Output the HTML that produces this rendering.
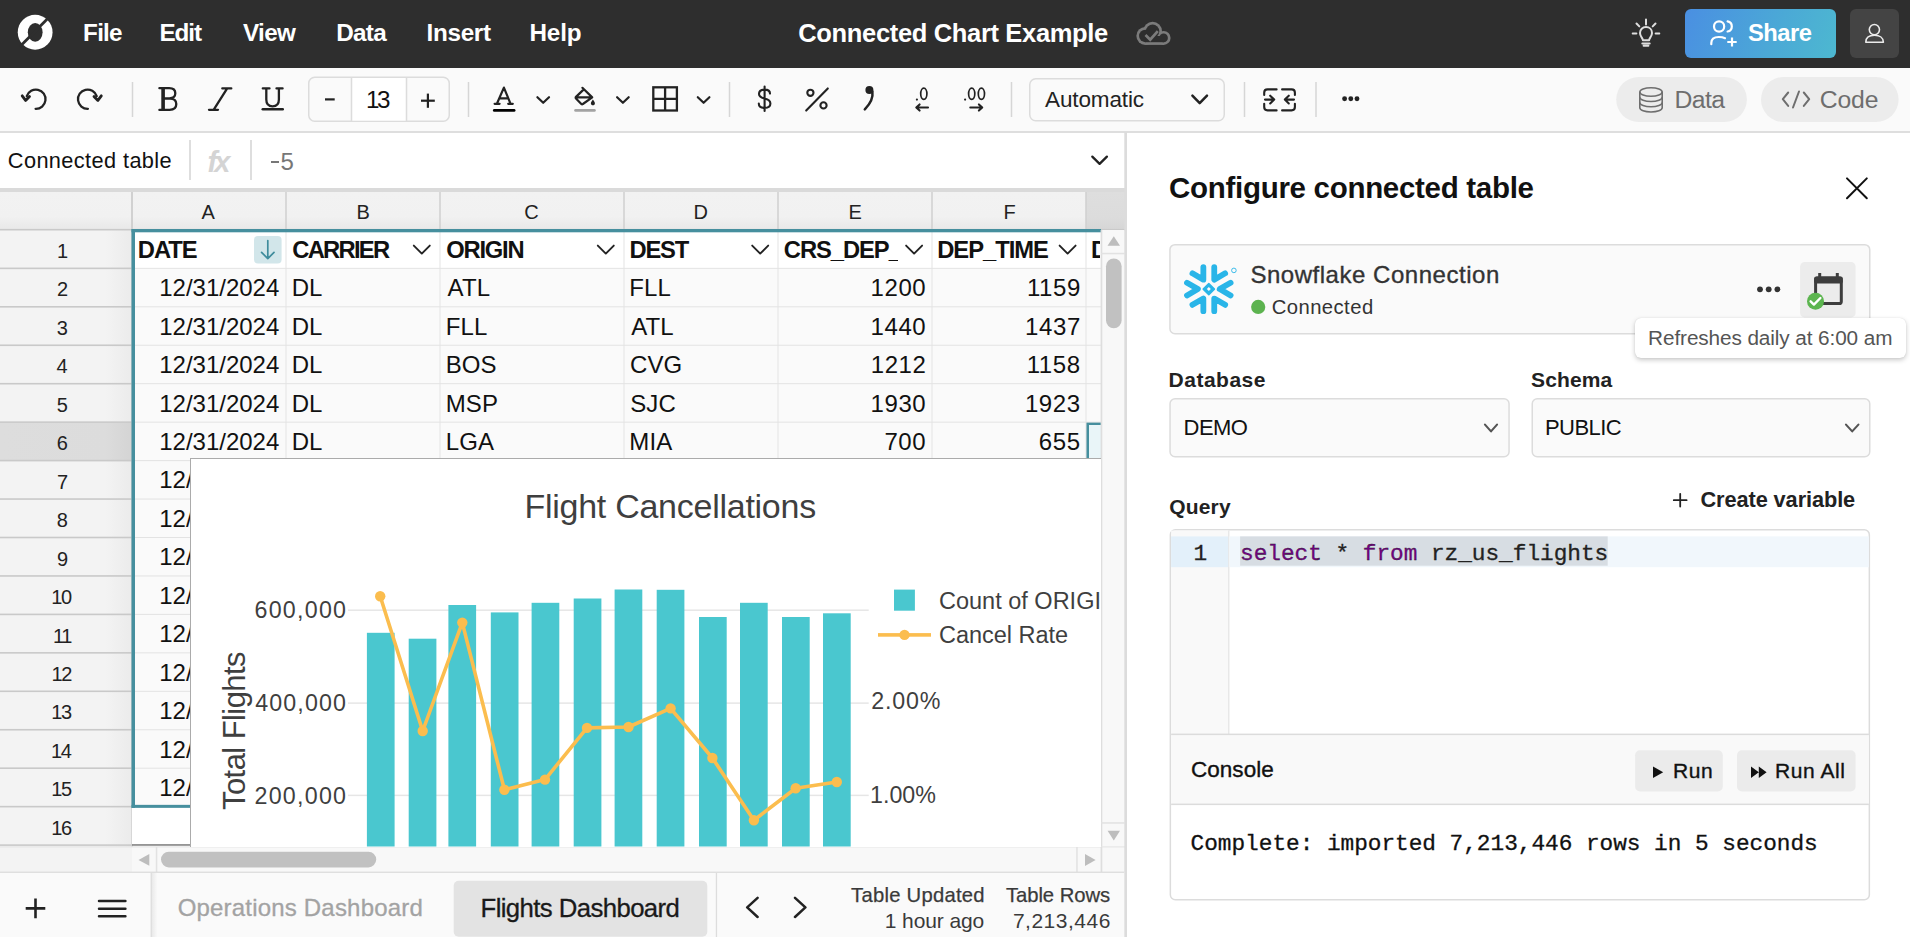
<!DOCTYPE html>
<html><head><meta charset="utf-8"><title>Connected Chart Example</title>
<style>
html,body{margin:0;padding:0;width:1910px;height:937px;overflow:hidden;background:#fff;font-family:"Liberation Sans",sans-serif}
.b{position:absolute;box-sizing:border-box}
.t{position:absolute;white-space:pre}
svg.b{overflow:visible}
</style></head><body>
<div class="b" style="left:0px;top:0px;width:1910px;height:67.5px;background:#2e2e2e"></div>
<svg class="b" style="left:0px;top:0px;" width="70" height="67" viewBox="0 0 70 67"><circle cx="35.15" cy="32.25" r="17.4" fill="#fff"/><ellipse cx="35.2" cy="32.35" rx="7.4" ry="9.3" fill="#2e2e2e"/><line x1="49" y1="17.2" x2="20" y2="46.6" stroke="#2e2e2e" stroke-width="2.8"/></svg>
<div class="t" style="left:83.1px;top:21.0px;font:normal 600 24.25px/24.25px 'Liberation Sans';color:#ffffff;letter-spacing:-0.76px;">File</div>
<div class="t" style="left:159.5px;top:21.0px;font:normal 600 24.25px/24.25px 'Liberation Sans';color:#ffffff;letter-spacing:-1.09px;">Edit</div>
<div class="t" style="left:243.0px;top:21.0px;font:normal 600 24.25px/24.25px 'Liberation Sans';color:#ffffff;letter-spacing:-0.63px;">View</div>
<div class="t" style="left:336.2px;top:21.0px;font:normal 600 24.25px/24.25px 'Liberation Sans';color:#ffffff;letter-spacing:-0.71px;">Data</div>
<div class="t" style="left:426.5px;top:21.0px;font:normal 600 24.25px/24.25px 'Liberation Sans';color:#ffffff;letter-spacing:-0.30px;">Insert</div>
<div class="t" style="left:529.5px;top:21.0px;font:normal 600 24.25px/24.25px 'Liberation Sans';color:#ffffff;letter-spacing:-0.17px;">Help</div>
<div class="t" style="left:798.3px;top:21.0px;font:normal 600 25.5px/25.5px 'Liberation Sans';color:#ffffff;letter-spacing:-0.34px;">Connected Chart Example</div>
<svg class="b" style="left:0;top:0" width="1910" height="67" viewBox="0 0 1910 67"><g fill="#7b7b7b"><circle cx="1145.3" cy="35.95" r="8.95"/><circle cx="1152.6" cy="31.2" r="9.35"/><circle cx="1163.6" cy="37.9" r="7"/><rect x="1145.3" y="36" width="18.7" height="8.9"/></g><g fill="#2e2e2e"><circle cx="1145.3" cy="35.95" r="6.25"/><circle cx="1152.6" cy="31.2" r="6.65"/><circle cx="1163.6" cy="37.9" r="4.3"/><rect x="1145.3" y="36" width="18.7" height="6.2"/></g><path d="M1145.5 35 L1150.2 39.7 L1157.8 31.1" fill="none" stroke="#7b7b7b" stroke-width="2.7"/></svg>
<svg class="b" style="left:0;top:0" width="1910" height="67" viewBox="0 0 1910 67"><g fill="none" stroke="#dedede" stroke-width="2" stroke-linecap="round" stroke-linejoin="round"><path d="M1642.9 40.2 C1642.9 38.2 1640 36.6 1640 33 C1640 29.6 1642.6 27.1 1646 27.1 C1649.4 27.1 1652 29.6 1652 33 C1652 36.6 1649.1 38.2 1649.1 40.2 Z"/><path d="M1642.3 43.4 H1649.7 M1643.6 45.8 H1648.4 M1646 19.6 V24.4 M1636.5 23.5 L1639.3 26.4 M1655.5 23.5 L1652.7 26.4 M1632.7 33.5 H1636.4 M1655.6 33.5 H1659.3"/></g></svg>
<div class="b" style="left:1685px;top:9px;width:151px;height:49px;background:linear-gradient(110deg,#4a8fe2 0%,#4ba9d6 60%,#4db8d0 100%);border-radius:6px"></div>
<svg class="b" style="left:0;top:0" width="1910" height="67" viewBox="0 0 1910 67"><g fill="none" stroke="#fff" stroke-width="2.2" stroke-linecap="round"><circle cx="1719.1" cy="26.5" r="5.1"/><path d="M1727.6 21.4 C1730.2 21.9 1731.8 24 1731.8 26.45 C1731.8 28.9 1730.2 31 1727.6 31.5"/><path d="M1711.3 44.2 V43 C1711.3 39.2 1714.2 37 1718.8 37 C1721.8 37 1723.6 37.5 1725 38.2"/></g><path d="M1732 37.6 V46.6 M1727.3 42 H1736.7" stroke="#fff" stroke-width="2.2" stroke-linecap="butt"/></svg>
<div class="t" style="left:1748.0px;top:21.0px;font:normal 700 23.75px/23.75px 'Liberation Sans';color:#ffffff;letter-spacing:-0.53px;">Share</div>
<div class="b" style="left:1850px;top:9px;width:49px;height:49px;background:#444;border-radius:6px"></div>
<svg class="b" style="left:0;top:0" width="1910" height="67" viewBox="0 0 1910 67"><g fill="none" stroke="#ebebeb" stroke-width="1.6" stroke-linejoin="round"><circle cx="1874.4" cy="29.6" r="5.1"/><path d="M1865.8 42.2 C1865.8 37.7 1869.4 35.3 1874.5 35.3 C1879.6 35.3 1883.4 37.7 1883.4 42.2 Z"/></g></svg>
<div class="b" style="left:0px;top:67.5px;width:1910px;height:63.5px;background:#fafafa"></div>
<div class="b" style="left:0px;top:131px;width:1125px;height:1.5px;background:#dedede"></div>
<div class="b" style="left:1125px;top:131px;width:785px;height:1.5px;background:#dedede"></div>
<svg class="b" style="left:0;top:0" width="1910" height="937" viewBox="0 0 1910 937"><g fill="none" stroke="#222" stroke-width="2.1" stroke-linecap="round" stroke-linejoin="round"><path d="M35.6 108.8 A9.6 9.6 0 1 0 26.8 96.2" stroke-width="2.3"/><path d="M22.2 95.8 L25.6 100.4 L29.5 96.4" stroke-width="2.8"/><path d="M87.9 108.8 A9.6 9.6 0 1 1 96.7 96.2" stroke-width="2.3"/><path d="M101.3 95.8 L97.9 100.4 L94 96.4" stroke-width="2.8"/></g><rect x="131.75" y="82" width="1.5" height="35" fill="#d6d6d6"/><rect x="467.75" y="82" width="1.5" height="35" fill="#d6d6d6"/><rect x="728.75" y="82" width="1.5" height="35" fill="#d6d6d6"/><rect x="1010.75" y="82" width="1.5" height="35" fill="#d6d6d6"/><rect x="1243.75" y="82" width="1.5" height="35" fill="#d6d6d6"/><rect x="1315.25" y="82" width="1.5" height="35" fill="#d6d6d6"/><g fill="none" stroke="#222" stroke-width="2.3" stroke-linecap="round" stroke-linejoin="round"><path d="M159.4 88.2 H169.2 C173.5 88.2 175.3 90.6 175.3 93.3 C175.3 96.2 173.2 98.3 169.4 98.3 H163 M163 98.6 H170 C174.6 98.6 176.3 101.3 176.3 104.1 C176.3 107.5 173.9 109.9 169.6 109.9 H159.4"/></g><rect x="161.3" y="88" width="3.6" height="22" fill="#222"/><g fill="none" stroke="#222" stroke-width="2.3" stroke-linecap="round" stroke-linejoin="round"><path d="M222.3 88.4 H231.3 M209 109.8 H218 M227.2 88.4 L213.6 109.8"/><path d="M262.8 88.4 H269.5 M276.5 88.4 H282.6 M266.3 88.6 V99.5 C266.3 104 269 106.3 272.6 106.3 C276.2 106.3 278.9 104 278.9 99.5 V88.6"/></g><rect x="261.5" y="108" width="22.5" height="2.6" rx="1.3" fill="#222"/><rect x="308.75" y="77.25" width="140.5" height="44" rx="6" fill="#fafafa" stroke="#dcdcdc" stroke-width="1.5"/><rect x="351.5" y="78" width="55" height="42.5" fill="#fff"/><rect x="350.75" y="77.5" width="1.5" height="43.5" fill="#dcdcdc"/><rect x="405.75" y="77.5" width="1.5" height="43.5" fill="#dcdcdc"/><rect x="325" y="98.3" width="9.7" height="2.2" fill="#222"/><rect x="421" y="99.6" width="13.8" height="2.2" fill="#222"/><rect x="426.8" y="93.6" width="2.2" height="14.2" fill="#222"/><g fill="none" stroke="#222" stroke-width="2.2" stroke-linecap="round" stroke-linejoin="round"><path d="M496.9 103.8 L503.9 87.6 L510.6 103.8 M499.6 98.4 H508.3 M494.6 103.8 H499.6 M508.2 103.8 H512.8"/><path d="M537.4 97.2 L543.2 102.8 L549 97.2"/><path d="M617.1 97.2 L622.9 102.8 L628.7 97.2"/><path d="M697.8 97.2 L703.6 102.8 L709.4 97.2"/><path d="M582.4 87.8 L592.2 97.4 L582.9 104 C582.4 104.4 581.8 104.4 581.3 104 L576 98.5 C575.5 98 575.5 97.4 576 96.9 L583.8 89.4 M575.8 97.3 H592.2"/></g><path d="M592.9 99.6 C594.2 101.4 594.9 102.5 594.9 103.4 C594.9 104.5 594 105.3 592.9 105.3 C591.8 105.3 590.9 104.5 590.9 103.4 C590.9 102.5 591.6 101.4 592.9 99.6Z" fill="#222"/><rect x="492.9" y="109" width="22.6" height="2.8" rx="1.4" fill="#000"/><rect x="574.2" y="109" width="21.6" height="2.8" rx="1.4" fill="#a3a3a3"/><g fill="none" stroke="#222" stroke-width="2.3"><rect x="653.3" y="87.3" width="23.6" height="23.2"/><path d="M665.1 87.3 V110.5 M653.3 98.9 H676.9"/></g><g fill="none" stroke="#222" stroke-width="2.1" stroke-linecap="round" stroke-linejoin="round"><path d="M770 93.6 C770 90.8 767.6 89.6 764.6 89.6 C761.4 89.6 759 91.2 759 94 C759 96.8 761.6 97.8 764.6 98.6 C767.8 99.4 770.4 100.6 770.4 103.6 C770.4 106.6 767.6 108 764.6 108 C761.4 108 758.8 106.6 758.8 103.6 M764.6 86.6 V111"/><circle cx="810.4" cy="92.8" r="3.1"/><circle cx="823.5" cy="105.4" r="3.1"/><path d="M806.2 110.6 L827.8 88.4"/><path d="M872.4 91.5 C873.4 98.5 869.6 104.5 864.8 109.3" stroke-width="2.5"/><path d="M928 107.5 H916.5 M919.6 104.4 L916.3 107.5 L919.6 110.6"/><path d="M970.3 107.5 H982 M978.9 104.4 L982.2 107.5 L978.9 110.6"/></g><circle cx="869.4" cy="90.1" r="4" fill="#222"/><g fill="none" stroke="#222" stroke-width="1.7"><ellipse cx="923.8" cy="93.8" rx="3.1" ry="5.6"/><ellipse cx="971.7" cy="93.8" rx="3.1" ry="5.6"/><ellipse cx="981.4" cy="93.8" rx="3.1" ry="5.6"/></g><circle cx="916.9" cy="99.6" r="1.1" fill="#222"/><circle cx="965.1" cy="99.6" r="1.1" fill="#222"/><rect x="1029.75" y="78.75" width="194.5" height="42" rx="6" fill="#fafafa" stroke="#dcdcdc" stroke-width="1.5"/><path d="M1192.4 95.6 L1199.7 103.2 L1207 95.6" fill="none" stroke="#222" stroke-width="2.5" stroke-linecap="round" stroke-linejoin="round"/><g fill="none" stroke="#222" stroke-width="2.1" stroke-linecap="round" stroke-linejoin="round"><path d="M1276.6 89.4 H1267.5 C1265.5 89.4 1264.2 90.7 1264.2 92.7 V94.9 M1264.2 103.7 V107.1 C1264.2 109.1 1265.5 110.4 1267.5 110.4 H1276.6"/><path d="M1282.1 89.4 H1291.6 C1293.6 89.4 1294.9 90.7 1294.9 92.7 V94.9 M1294.9 103.7 V107.1 C1294.9 109.1 1293.6 110.4 1291.6 110.4 H1282.1"/><path d="M1265 99.6 H1274.2 M1270.2 95.7 L1274.2 99.6 L1270.2 103.5"/><path d="M1294 99.6 H1284.8 M1288.8 95.7 L1284.8 99.6 L1288.8 103.5"/></g><circle cx="1344.6" cy="98.8" r="2.45" fill="#222"/><circle cx="1350.8" cy="98.8" r="2.45" fill="#222"/><circle cx="1357.0" cy="98.8" r="2.45" fill="#222"/><rect x="1616.2" y="77" width="130.7" height="45" rx="22.5" fill="#ececec"/><rect x="1761" y="77" width="137.6" height="45" rx="22.5" fill="#ececec"/><g fill="none" stroke="#6e6e6e" stroke-width="1.6"><ellipse cx="1651" cy="92" rx="11.2" ry="4.2"/><path d="M1639.8 92 V107.8 C1639.8 110.2 1644.8 112 1651 112 C1657.2 112 1662.2 110.2 1662.2 107.8 V92"/><path d="M1639.8 97.3 C1639.8 99.6 1644.8 101.5 1651 101.5 C1657.2 101.5 1662.2 99.6 1662.2 97.3"/><path d="M1639.8 102.6 C1639.8 104.9 1644.8 106.8 1651 106.8 C1657.2 106.8 1662.2 104.9 1662.2 102.6"/></g><g fill="none" stroke="#6e6e6e" stroke-width="2" stroke-linecap="round" stroke-linejoin="round"><path d="M1788.2 92.5 L1782.8 99.2 L1788.2 105.9 M1803.8 92.5 L1809.2 99.2 L1803.8 105.9 M1799 91.5 L1793 107.5"/></g></svg>
<div class="t" style="left:366.1px;top:88.0px;font:normal 400 24.25px/24.25px 'Liberation Sans';color:#111;letter-spacing:-2.60px;">13</div>
<div class="t" style="left:1045.0px;top:89.0px;font:normal 400 22.5px/22.5px 'Liberation Sans';color:#222;letter-spacing:-0.12px;">Automatic</div>
<div class="t" style="left:1674.6px;top:88.0px;font:normal 400 24.75px/24.75px 'Liberation Sans';color:#6e6e6e;letter-spacing:-0.66px;">Data</div>
<div class="t" style="left:1819.8px;top:88.0px;font:normal 400 24.75px/24.75px 'Liberation Sans';color:#6e6e6e;letter-spacing:-0.18px;">Code</div>
<div class="b" style="left:0px;top:132.5px;width:1125px;height:55.5px;background:#fff"></div>
<div class="t" style="left:7.8px;top:150.0px;font:normal 400 21.75px/21.75px 'Liberation Sans';color:#111;letter-spacing:0.39px;">Connected table</div>
<div class="b" style="left:189px;top:139.7px;width:1.5px;height:40.6px;background:#dedede"></div>
<div class="b" style="left:250px;top:139.7px;width:1.5px;height:40.6px;background:#dedede"></div>
<div class="t" style="left:207.6px;top:148.0px;font:italic 700 29.0px/29.0px 'Liberation Sans';color:#d4d4d4;letter-spacing:-2.90px;">fx</div>
<div class="b" style="left:271px;top:161.2px;width:7.6px;height:2.2px;background:#777"></div>
<div class="t" style="left:280.4px;top:150.0px;font:normal 400 24.0px/24.0px 'Liberation Sans';color:#777;letter-spacing:0.00px;">5</div>
<svg class="b" style="left:0;top:0" width="1910" height="937" viewBox="0 0 1910 937"><path d="M1092.3 156.6 L1099.6 163.9 L1106.9 156.6" fill="none" stroke="#222" stroke-width="2.3" stroke-linecap="round" stroke-linejoin="round"/></svg>
<div class="b" style="left:0px;top:188px;width:1125px;height:4px;background:#dadada"></div>
<div class="b" style="left:0px;top:192px;width:1125px;height:38px;background:linear-gradient(#f2f2f2 0%,#f1f1f1 65%,#e8e8e8 100%)"></div>
<div class="b" style="left:1086px;top:192px;width:39px;height:38px;background:linear-gradient(#dedede 0%,#dcdcdc 65%,#d6d6d6 100%)"></div>
<div class="b" style="left:0px;top:230px;width:132px;height:617px;background:linear-gradient(to right,#f3f3f3 0%,#f3f3f3 80%,#ebebeb 100%)"></div>
<div class="b" style="left:0px;top:422.9px;width:132px;height:38.45px;background:linear-gradient(to right,#dddddd 0%,#dcdcdc 80%,#d4d4d4 100%)"></div>
<div class="b" style="left:132px;top:230px;width:969px;height:617px;background:#fafafa"></div>
<div class="b" style="left:132px;top:230px;width:969px;height:38.5px;background:#fff"></div>
<div class="b" style="left:1086px;top:422.15px;width:15px;height:38.45px;background:#e9f5f8;border-left:3.4px solid #468f9e;border-top:3.4px solid #468f9e"></div>
<svg class="b" style="left:0;top:0" width="1910" height="937" viewBox="0 0 1910 937"><rect x="131.25" y="192" width="1.5" height="38" fill="#cfcfcf"/><rect x="285.25" y="192" width="1.5" height="38" fill="#cfcfcf"/><rect x="439.25" y="192" width="1.5" height="38" fill="#cfcfcf"/><rect x="623.25" y="192" width="1.5" height="38" fill="#cfcfcf"/><rect x="777.25" y="192" width="1.5" height="38" fill="#cfcfcf"/><rect x="931.25" y="192" width="1.5" height="38" fill="#cfcfcf"/><rect x="1085.25" y="192" width="1.5" height="38" fill="#cfcfcf"/><rect x="0" y="228.9" width="1125" height="1.6" fill="#c9c9c9"/><rect x="0" y="267.55" width="132" height="1.6" fill="#c9c9c9"/><rect x="0" y="306.00" width="132" height="1.6" fill="#c9c9c9"/><rect x="0" y="344.45" width="132" height="1.6" fill="#c9c9c9"/><rect x="0" y="382.90" width="132" height="1.6" fill="#c9c9c9"/><rect x="0" y="421.35" width="132" height="1.6" fill="#c9c9c9"/><rect x="0" y="459.80" width="132" height="1.6" fill="#c9c9c9"/><rect x="0" y="498.25" width="132" height="1.6" fill="#c9c9c9"/><rect x="0" y="536.70" width="132" height="1.6" fill="#c9c9c9"/><rect x="0" y="575.15" width="132" height="1.6" fill="#c9c9c9"/><rect x="0" y="613.60" width="132" height="1.6" fill="#c9c9c9"/><rect x="0" y="652.05" width="132" height="1.6" fill="#c9c9c9"/><rect x="0" y="690.50" width="132" height="1.6" fill="#c9c9c9"/><rect x="0" y="728.95" width="132" height="1.6" fill="#c9c9c9"/><rect x="0" y="767.40" width="132" height="1.6" fill="#c9c9c9"/><rect x="0" y="805.85" width="132" height="1.6" fill="#c9c9c9"/><rect x="0" y="844.30" width="132" height="1.6" fill="#c9c9c9"/><rect x="132" y="267.85" width="969" height="1" fill="#e3e3e3"/><rect x="132" y="306.30" width="969" height="1" fill="#e3e3e3"/><rect x="132" y="344.75" width="969" height="1" fill="#e3e3e3"/><rect x="132" y="383.20" width="969" height="1" fill="#e3e3e3"/><rect x="132" y="421.65" width="969" height="1" fill="#e3e3e3"/><rect x="132" y="460.10" width="969" height="1" fill="#e3e3e3"/><rect x="132" y="498.55" width="969" height="1" fill="#e3e3e3"/><rect x="132" y="537.00" width="969" height="1" fill="#e3e3e3"/><rect x="132" y="575.45" width="969" height="1" fill="#e3e3e3"/><rect x="132" y="613.90" width="969" height="1" fill="#e3e3e3"/><rect x="132" y="652.35" width="969" height="1" fill="#e3e3e3"/><rect x="132" y="690.80" width="969" height="1" fill="#e3e3e3"/><rect x="132" y="729.25" width="969" height="1" fill="#e3e3e3"/><rect x="132" y="767.70" width="969" height="1" fill="#e3e3e3"/><rect x="132" y="806.15" width="969" height="1" fill="#e3e3e3"/><rect x="285.5" y="230" width="1" height="577" fill="#e3e3e3"/><rect x="439.5" y="230" width="1" height="577" fill="#e3e3e3"/><rect x="623.5" y="230" width="1" height="577" fill="#e3e3e3"/><rect x="777.5" y="230" width="1" height="577" fill="#e3e3e3"/><rect x="931.5" y="230" width="1" height="577" fill="#e3e3e3"/><rect x="1085.5" y="230" width="1" height="577" fill="#e3e3e3"/><rect x="131.3" y="192" width="1.5" height="655" fill="#cfcfcf"/><rect x="132" y="844.10" width="58" height="1.6" fill="#7d7d7d"/><rect x="132" y="807.65" width="58" height="36.45" fill="#fff"/><rect x="131.5" y="229" width="969.5" height="3.3" fill="#468f9e"/><rect x="131.5" y="229" width="3.5" height="578.85" fill="#468f9e"/><rect x="131.5" y="804.85" width="60" height="3" fill="#468f9e"/><rect x="254" y="236" width="27.6" height="27.5" rx="4" fill="#d2e6ea"/><path d="M267.8 240.5 V258.6 M261.6 252.4 L267.8 258.6 L274 252.4" fill="none" stroke="#3f8c9c" stroke-width="1.7" stroke-linecap="round" stroke-linejoin="round"/><path d="M413.8 245.6 L421.8 253.6 L429.8 245.6" fill="none" stroke="#222" stroke-width="1.9" stroke-linecap="round" stroke-linejoin="round"/><path d="M597.8 245.6 L605.8 253.6 L613.8 245.6" fill="none" stroke="#222" stroke-width="1.9" stroke-linecap="round" stroke-linejoin="round"/><path d="M752.2 245.6 L760.2 253.6 L768.2 245.6" fill="none" stroke="#222" stroke-width="1.9" stroke-linecap="round" stroke-linejoin="round"/><path d="M906.1 245.6 L914.1 253.6 L922.1 245.6" fill="none" stroke="#222" stroke-width="1.9" stroke-linecap="round" stroke-linejoin="round"/><path d="M1059.6 245.6 L1067.6 253.6 L1075.6 245.6" fill="none" stroke="#222" stroke-width="1.9" stroke-linecap="round" stroke-linejoin="round"/><rect x="1101" y="230" width="23.5" height="617" fill="#f8f8f8"/><rect x="1100.6" y="230" width="1.7" height="617" fill="#dedede"/><rect x="1101" y="252.8" width="23.5" height="1.5" fill="#e2e2e2"/><path d="M1107.5 245.8 L1113.8 236.2 L1120 245.8 Z" fill="#bdbdbd"/><rect x="1106" y="258.5" width="15.6" height="69.7" rx="7.8" fill="#c1c1c1"/><rect x="1101" y="822.2" width="23.5" height="1.5" fill="#e2e2e2"/><path d="M1107.6 830.8 L1120 830.8 L1113.8 840.4 Z" fill="#bdbdbd"/><rect x="132" y="847" width="993" height="25" fill="#f8f8f8"/><rect x="0" y="847" width="132" height="25" fill="#f3f3f3"/><rect x="0" y="846.3" width="1125" height="1.2" fill="#e6e6e6"/><rect x="155.8" y="847" width="1.5" height="25" fill="#e2e2e2"/><rect x="1076.2" y="847" width="1.5" height="25" fill="#e2e2e2"/><rect x="1100.6" y="847" width="1.7" height="25" fill="#dedede"/><path d="M149.3 854 L138.5 859.9 L149.3 865.8 Z" fill="#bdbdbd"/><path d="M1085 853.9 L1095.6 859.9 L1085 865.9 Z" fill="#bdbdbd"/><rect x="161" y="851.8" width="215.2" height="15.6" rx="7.8" fill="#c1c1c1"/><rect x="1124.3" y="132" width="2.7" height="805" fill="#dcdcdc"/></svg>
<div class="t" style="left:201.6px;top:202.0px;font:normal 400 20.0px/20.0px 'Liberation Sans';color:#222;letter-spacing:0.00px;">A</div>
<div class="t" style="left:356.6px;top:202.0px;font:normal 400 20.0px/20.0px 'Liberation Sans';color:#222;letter-spacing:0.00px;">B</div>
<div class="t" style="left:524.2px;top:202.0px;font:normal 400 20.0px/20.0px 'Liberation Sans';color:#222;letter-spacing:0.00px;">C</div>
<div class="t" style="left:693.4px;top:202.0px;font:normal 400 20.0px/20.0px 'Liberation Sans';color:#222;letter-spacing:0.00px;">D</div>
<div class="t" style="left:848.4px;top:202.0px;font:normal 400 20.0px/20.0px 'Liberation Sans';color:#222;letter-spacing:0.00px;">E</div>
<div class="t" style="left:1003.4px;top:202.0px;font:normal 400 20.0px/20.0px 'Liberation Sans';color:#222;letter-spacing:0.00px;">F</div>
<div class="t" style="left:57.0px;top:241.0px;font:normal 400 20.0px/20.0px 'Liberation Sans';color:#222;letter-spacing:0.00px;">1</div>
<div class="t" style="left:57.0px;top:279.0px;font:normal 400 20.0px/20.0px 'Liberation Sans';color:#222;letter-spacing:0.00px;">2</div>
<div class="t" style="left:56.8px;top:318.0px;font:normal 400 20.0px/20.0px 'Liberation Sans';color:#222;letter-spacing:0.00px;">3</div>
<div class="t" style="left:56.6px;top:356.0px;font:normal 400 20.0px/20.0px 'Liberation Sans';color:#222;letter-spacing:0.00px;">4</div>
<div class="t" style="left:56.8px;top:395.0px;font:normal 400 20.0px/20.0px 'Liberation Sans';color:#222;letter-spacing:0.00px;">5</div>
<div class="t" style="left:56.8px;top:433.0px;font:normal 400 20.0px/20.0px 'Liberation Sans';color:#222;letter-spacing:0.00px;">6</div>
<div class="t" style="left:57.0px;top:472.0px;font:normal 400 20.0px/20.0px 'Liberation Sans';color:#222;letter-spacing:0.00px;">7</div>
<div class="t" style="left:56.8px;top:510.0px;font:normal 400 20.0px/20.0px 'Liberation Sans';color:#222;letter-spacing:0.00px;">8</div>
<div class="t" style="left:57.0px;top:549.0px;font:normal 400 20.0px/20.0px 'Liberation Sans';color:#222;letter-spacing:0.00px;">9</div>
<div class="t" style="left:51.2px;top:587.0px;font:normal 400 20.0px/20.0px 'Liberation Sans';color:#222;letter-spacing:-1.30px;">10</div>
<div class="t" style="left:52.9px;top:626.0px;font:normal 400 20.0px/20.0px 'Liberation Sans';color:#222;letter-spacing:-1.30px;">11</div>
<div class="t" style="left:51.4px;top:664.0px;font:normal 400 20.0px/20.0px 'Liberation Sans';color:#222;letter-spacing:-1.30px;">12</div>
<div class="t" style="left:51.2px;top:702.0px;font:normal 400 20.0px/20.0px 'Liberation Sans';color:#222;letter-spacing:-1.30px;">13</div>
<div class="t" style="left:51.0px;top:741.0px;font:normal 400 20.0px/20.0px 'Liberation Sans';color:#222;letter-spacing:-1.30px;">14</div>
<div class="t" style="left:51.2px;top:779.0px;font:normal 400 20.0px/20.0px 'Liberation Sans';color:#222;letter-spacing:-1.30px;">15</div>
<div class="t" style="left:51.2px;top:818.0px;font:normal 400 20.0px/20.0px 'Liberation Sans';color:#222;letter-spacing:-1.30px;">16</div>
<div class="t" style="left:137.8px;top:238.0px;font:normal 700 23.75px/23.75px 'Liberation Sans';color:#111;letter-spacing:-1.00px;">DATE</div>
<div class="t" style="left:292.2px;top:238.0px;font:normal 700 23.75px/23.75px 'Liberation Sans';color:#111;letter-spacing:-1.71px;">CARRIER</div>
<div class="t" style="left:446.2px;top:238.0px;font:normal 700 23.75px/23.75px 'Liberation Sans';color:#111;letter-spacing:-1.20px;">ORIGIN</div>
<div class="t" style="left:629.4px;top:238.0px;font:normal 700 23.75px/23.75px 'Liberation Sans';color:#111;letter-spacing:-1.13px;">DEST</div>
<div class="t" style="left:783.8px;top:238.0px;font:normal 700 23.75px/23.75px 'Liberation Sans';color:#111;letter-spacing:-1.05px;width:114px;overflow:hidden">CRS_DEP_TIME</div>
<div class="t" style="left:937.2px;top:238.0px;font:normal 700 23.75px/23.75px 'Liberation Sans';color:#111;letter-spacing:-1.02px;">DEP_TIME</div>
<div class="t" style="left:1091.1px;top:238.0px;font:normal 700 23.75px/23.75px 'Liberation Sans';color:#111;letter-spacing:-1.05px;width:9px;overflow:hidden">DEP_DELAY</div>
<div class="t" style="left:159.2px;top:276.0px;font:normal 400 24.0px/24.0px 'Liberation Sans';color:#111;letter-spacing:0.00px;">12/31/2024</div>
<div class="t" style="left:291.7px;top:276.0px;font:normal 400 24.0px/24.0px 'Liberation Sans';color:#111;letter-spacing:0.10px;">DL</div>
<div class="t" style="left:447.6px;top:276.0px;font:normal 400 24.0px/24.0px 'Liberation Sans';color:#111;letter-spacing:0.10px;">ATL</div>
<div class="t" style="left:629.3px;top:276.0px;font:normal 400 24.0px/24.0px 'Liberation Sans';color:#111;letter-spacing:0.10px;">FLL</div>
<div class="t" style="left:870.5px;top:276.0px;font:normal 400 24.0px/24.0px 'Liberation Sans';color:#111;letter-spacing:0.60px;">1200</div>
<div class="t" style="left:1026.9px;top:276.0px;font:normal 400 24.0px/24.0px 'Liberation Sans';color:#111;letter-spacing:0.60px;">1159</div>
<div class="t" style="left:159.2px;top:315.0px;font:normal 400 24.0px/24.0px 'Liberation Sans';color:#111;letter-spacing:0.00px;">12/31/2024</div>
<div class="t" style="left:291.7px;top:315.0px;font:normal 400 24.0px/24.0px 'Liberation Sans';color:#111;letter-spacing:0.10px;">DL</div>
<div class="t" style="left:445.7px;top:315.0px;font:normal 400 24.0px/24.0px 'Liberation Sans';color:#111;letter-spacing:0.10px;">FLL</div>
<div class="t" style="left:631.2px;top:315.0px;font:normal 400 24.0px/24.0px 'Liberation Sans';color:#111;letter-spacing:0.10px;">ATL</div>
<div class="t" style="left:870.5px;top:315.0px;font:normal 400 24.0px/24.0px 'Liberation Sans';color:#111;letter-spacing:0.60px;">1440</div>
<div class="t" style="left:1025.1px;top:315.0px;font:normal 400 24.0px/24.0px 'Liberation Sans';color:#111;letter-spacing:0.60px;">1437</div>
<div class="t" style="left:159.2px;top:353.0px;font:normal 400 24.0px/24.0px 'Liberation Sans';color:#111;letter-spacing:0.00px;">12/31/2024</div>
<div class="t" style="left:291.7px;top:353.0px;font:normal 400 24.0px/24.0px 'Liberation Sans';color:#111;letter-spacing:0.10px;">DL</div>
<div class="t" style="left:445.7px;top:353.0px;font:normal 400 24.0px/24.0px 'Liberation Sans';color:#111;letter-spacing:0.10px;">BOS</div>
<div class="t" style="left:630.0px;top:353.0px;font:normal 400 24.0px/24.0px 'Liberation Sans';color:#111;letter-spacing:0.10px;">CVG</div>
<div class="t" style="left:870.7px;top:353.0px;font:normal 400 24.0px/24.0px 'Liberation Sans';color:#111;letter-spacing:0.60px;">1212</div>
<div class="t" style="left:1026.7px;top:353.0px;font:normal 400 24.0px/24.0px 'Liberation Sans';color:#111;letter-spacing:0.60px;">1158</div>
<div class="t" style="left:159.2px;top:392.0px;font:normal 400 24.0px/24.0px 'Liberation Sans';color:#111;letter-spacing:0.00px;">12/31/2024</div>
<div class="t" style="left:291.7px;top:392.0px;font:normal 400 24.0px/24.0px 'Liberation Sans';color:#111;letter-spacing:0.10px;">DL</div>
<div class="t" style="left:445.7px;top:392.0px;font:normal 400 24.0px/24.0px 'Liberation Sans';color:#111;letter-spacing:0.10px;">MSP</div>
<div class="t" style="left:630.2px;top:392.0px;font:normal 400 24.0px/24.0px 'Liberation Sans';color:#111;letter-spacing:0.10px;">SJC</div>
<div class="t" style="left:870.5px;top:392.0px;font:normal 400 24.0px/24.0px 'Liberation Sans';color:#111;letter-spacing:0.60px;">1930</div>
<div class="t" style="left:1024.9px;top:392.0px;font:normal 400 24.0px/24.0px 'Liberation Sans';color:#111;letter-spacing:0.60px;">1923</div>
<div class="t" style="left:159.2px;top:430.0px;font:normal 400 24.0px/24.0px 'Liberation Sans';color:#111;letter-spacing:0.00px;">12/31/2024</div>
<div class="t" style="left:291.7px;top:430.0px;font:normal 400 24.0px/24.0px 'Liberation Sans';color:#111;letter-spacing:0.10px;">DL</div>
<div class="t" style="left:445.7px;top:430.0px;font:normal 400 24.0px/24.0px 'Liberation Sans';color:#111;letter-spacing:0.10px;">LGA</div>
<div class="t" style="left:629.3px;top:430.0px;font:normal 400 24.0px/24.0px 'Liberation Sans';color:#111;letter-spacing:0.10px;">MIA</div>
<div class="t" style="left:884.4px;top:430.0px;font:normal 400 24.0px/24.0px 'Liberation Sans';color:#111;letter-spacing:0.60px;">700</div>
<div class="t" style="left:1038.8px;top:430.0px;font:normal 400 24.0px/24.0px 'Liberation Sans';color:#111;letter-spacing:0.60px;">655</div>
<div class="t" style="left:159.2px;top:468.0px;font:normal 400 24.0px/24.0px 'Liberation Sans';color:#111;letter-spacing:0.00px;">12/31/2024</div>
<div class="t" style="left:159.2px;top:507.0px;font:normal 400 24.0px/24.0px 'Liberation Sans';color:#111;letter-spacing:0.00px;">12/31/2024</div>
<div class="t" style="left:159.2px;top:545.0px;font:normal 400 24.0px/24.0px 'Liberation Sans';color:#111;letter-spacing:0.00px;">12/31/2024</div>
<div class="t" style="left:159.2px;top:584.0px;font:normal 400 24.0px/24.0px 'Liberation Sans';color:#111;letter-spacing:0.00px;">12/31/2024</div>
<div class="t" style="left:159.2px;top:622.0px;font:normal 400 24.0px/24.0px 'Liberation Sans';color:#111;letter-spacing:0.00px;">12/31/2024</div>
<div class="t" style="left:159.2px;top:661.0px;font:normal 400 24.0px/24.0px 'Liberation Sans';color:#111;letter-spacing:0.00px;">12/31/2024</div>
<div class="t" style="left:159.2px;top:699.0px;font:normal 400 24.0px/24.0px 'Liberation Sans';color:#111;letter-spacing:0.00px;">12/31/2024</div>
<div class="t" style="left:159.2px;top:738.0px;font:normal 400 24.0px/24.0px 'Liberation Sans';color:#111;letter-spacing:0.00px;">12/31/2024</div>
<div class="t" style="left:159.2px;top:776.0px;font:normal 400 24.0px/24.0px 'Liberation Sans';color:#111;letter-spacing:0.00px;">12/31/2024</div>
<div class="b" style="left:189.5px;top:457.5px;width:911.5px;height:389.5px;background:#fff;border-left:1.8px solid #ababab;border-top:1.8px solid #ababab"></div>
<svg class="b" style="left:0;top:0" width="1910" height="937" viewBox="0 0 1910 937"><defs><clipPath id="cc"><rect x="191" y="459" width="909.5" height="387.5"/></clipPath></defs><g clip-path="url(#cc)"><rect x="348" y="609.45" width="520.7" height="1.5" fill="#e6e6e6"/><rect x="348" y="702.35" width="520.7" height="1.5" fill="#e6e6e6"/><rect x="348" y="794.65" width="520.7" height="1.5" fill="#e6e6e6"/><rect x="366.90" y="632.8" width="27.7" height="214.2" fill="#4ac7cf"/><rect x="408.70" y="638.7" width="27.7" height="208.3" fill="#4ac7cf"/><rect x="448.40" y="605" width="27.7" height="242.0" fill="#4ac7cf"/><rect x="490.80" y="612.4" width="27.7" height="234.6" fill="#4ac7cf"/><rect x="531.60" y="602.8" width="27.7" height="244.2" fill="#4ac7cf"/><rect x="573.70" y="598.5" width="27.7" height="248.5" fill="#4ac7cf"/><rect x="614.60" y="589.5" width="27.7" height="257.5" fill="#4ac7cf"/><rect x="656.70" y="589.8" width="27.7" height="257.2" fill="#4ac7cf"/><rect x="699.00" y="617" width="27.7" height="230.0" fill="#4ac7cf"/><rect x="740.00" y="602.8" width="27.7" height="244.2" fill="#4ac7cf"/><rect x="782.00" y="617" width="27.7" height="230.0" fill="#4ac7cf"/><rect x="823.00" y="613.3" width="27.7" height="233.7" fill="#4ac7cf"/><polyline points="380.2,596.3 422.7,731 462.3,622.6 504.4,789.8 545,779.6 587,727.9 628.5,727 670.6,708.4 712.4,758 753.9,820.2 795.7,788.3 836.8,782" fill="none" stroke="#fbbd4e" stroke-width="3.6" stroke-linejoin="round"/><circle cx="380.2" cy="596.3" r="5.2" fill="#fbbd4e"/><circle cx="422.7" cy="731" r="5.2" fill="#fbbd4e"/><circle cx="462.3" cy="622.6" r="5.2" fill="#fbbd4e"/><circle cx="504.4" cy="789.8" r="5.2" fill="#fbbd4e"/><circle cx="545" cy="779.6" r="5.2" fill="#fbbd4e"/><circle cx="587" cy="727.9" r="5.2" fill="#fbbd4e"/><circle cx="628.5" cy="727" r="5.2" fill="#fbbd4e"/><circle cx="670.6" cy="708.4" r="5.2" fill="#fbbd4e"/><circle cx="712.4" cy="758" r="5.2" fill="#fbbd4e"/><circle cx="753.9" cy="820.2" r="5.2" fill="#fbbd4e"/><circle cx="795.7" cy="788.3" r="5.2" fill="#fbbd4e"/><circle cx="836.8" cy="782" r="5.2" fill="#fbbd4e"/><rect x="894" y="589.6" width="20.9" height="21.1" fill="#4ac7cf"/><rect x="878" y="633.1" width="53" height="3.6" fill="#fbbd4e"/><circle cx="904.5" cy="634.9" r="5.2" fill="#fbbd4e"/></g></svg>
<div class="t" style="left:524.4px;top:489.0px;font:normal 400 34.0px/34.0px 'Liberation Sans';color:#3f3f3f;letter-spacing:-0.26px;">Flight Cancellations</div>
<div class="t" style="left:254.5px;top:599.0px;font:normal 400 23.25px/23.25px 'Liberation Sans';color:#3f3f3f;letter-spacing:1.24px;">600,000</div>
<div class="t" style="left:255.2px;top:692.0px;font:normal 400 23.25px/23.25px 'Liberation Sans';color:#3f3f3f;letter-spacing:1.13px;">400,000</div>
<div class="t" style="left:254.5px;top:785.0px;font:normal 400 23.25px/23.25px 'Liberation Sans';color:#3f3f3f;letter-spacing:1.24px;">200,000</div>
<div class="t" style="left:871.2px;top:690.0px;font:normal 400 23.25px/23.25px 'Liberation Sans';color:#3f3f3f;letter-spacing:0.80px;">2.00%</div>
<div class="t" style="left:870.1px;top:784.0px;font:normal 400 23.25px/23.25px 'Liberation Sans';color:#3f3f3f;letter-spacing:-0.03px;">1.00%</div>
<div class="t" style="left:939.0px;top:590.0px;font:normal 400 23.5px/23.5px 'Liberation Sans';color:#3f3f3f;letter-spacing:0.00px;width:161px;overflow:hidden;height:30px">Count of ORIGIN</div>
<div class="t" style="left:939.0px;top:624.0px;font:normal 400 23.5px/23.5px 'Liberation Sans';color:#3f3f3f;letter-spacing:-0.02px;">Cancel Rate</div>
<div class="t" style="left:244.8px;top:784.2px;font:400 31px/31px 'Liberation Sans';color:#3f3f3f;letter-spacing:-0.57px;transform:rotate(-90deg);transform-origin:0 26px">Total Flights</div>
<div class="b" style="left:1127px;top:132.5px;width:783px;height:804.5px;background:#fff"></div>
<div class="t" style="left:1169.1px;top:173.0px;font:normal 700 29.5px/29.5px 'Liberation Sans';color:#111;letter-spacing:-0.30px;">Configure connected table</div>
<svg class="b" style="left:0;top:0" width="1910" height="937" viewBox="0 0 1910 937"><path d="M1847 178.4 L1866.8 198.2 M1866.8 178.4 L1847 198.2" stroke="#111" stroke-width="2" stroke-linecap="round"/><rect x="1169.95" y="244.65" width="699.8" height="89" rx="5" fill="#fafafa" stroke="#dcdcdc" stroke-width="1.5"/><path d="M1230.61 295.40 L1219.70 289.10 L1230.61 282.80 M1214.25 311.14 L1214.25 298.54 L1225.16 304.84 M1192.44 304.84 L1203.35 298.54 L1203.35 311.14 M1186.99 282.80 L1197.90 289.10 L1186.99 295.40 M1203.35 267.06 L1203.35 279.66 L1192.44 273.36 M1225.16 273.36 L1214.25 279.66 L1214.25 267.06" fill="none" stroke="#29b5e8" stroke-width="5.8" stroke-linecap="round" stroke-linejoin="round"/><path d="M1208.8 283.5 L1214.3999999999999 289.1 L1208.8 294.70000000000005 L1203.2 289.1 Z" fill="#29b5e8" stroke="#29b5e8" stroke-width="1.5" stroke-linejoin="round"/><path d="M1208.8 287.1 L1210.8 289.1 L1208.8 291.1 L1206.8 289.1 Z" fill="#fafafa"/><circle cx="1233.9" cy="270.4" r="2.3" fill="none" stroke="#29b5e8" stroke-width="0.9"/><circle cx="1258.2" cy="306.9" r="7.1" fill="#5cb34f"/><circle cx="1760" cy="289.3" r="2.9" fill="#333"/><circle cx="1768.7" cy="289.3" r="2.9" fill="#333"/><circle cx="1777.4" cy="289.3" r="2.9" fill="#333"/><rect x="1800.1" y="262.1" width="55.5" height="55.3" rx="4.5" fill="#ececec"/><rect x="1815.6" y="278" width="25.7" height="25.6" rx="2.2" fill="none" stroke="#3d3d3d" stroke-width="3"/><rect x="1814.1" y="276.4" width="28.7" height="7.2" rx="2" fill="#3d3d3d"/><rect x="1818.2" y="273" width="3" height="5" fill="#3d3d3d"/><rect x="1835.8" y="273" width="3" height="5" fill="#3d3d3d"/><circle cx="1815.5" cy="301.3" r="8.5" fill="#5cb54f"/><path d="M1810.6 301.3 L1813.9 304.6 L1820.4 298" fill="none" stroke="#fff" stroke-width="2.4" stroke-linecap="round" stroke-linejoin="round"/><rect x="1170.05" y="398.85" width="339" height="57.8" rx="5" fill="#fafafa" stroke="#dcdcdc" stroke-width="1.5"/><rect x="1532.25" y="398.85" width="337.5" height="57.8" rx="5" fill="#fafafa" stroke="#dcdcdc" stroke-width="1.5"/><path d="M1485 424.6 L1491 431.4 L1497 424.6 M1846 424.6 L1852.2 431.4 L1858.4 424.6" fill="none" stroke="#555" stroke-width="2.1" stroke-linecap="round" stroke-linejoin="round"/><path d="M1680.2 493.8 V506.6 M1673.8 500.2 H1686.6" stroke="#222" stroke-width="1.8" stroke-linecap="round"/><rect x="1170.35" y="529.75" width="699" height="370" rx="5" fill="#fff" stroke="#dcdcdc" stroke-width="1.5"/><rect x="1171.1" y="530.5" width="57.6" height="203.8" fill="#f9f9f9"/><rect x="1228.2" y="530.5" width="1.2" height="203.8" fill="#e3e3e3"/><rect x="1171.1" y="536.4" width="57.1" height="30.8" fill="#e3f0fa"/><rect x="1229.4" y="536.4" width="639.5" height="30.8" fill="#f1f7fc"/><rect x="1240.1" y="536.4" width="367.6" height="29.3" fill="#d7dde3"/><rect x="1171.1" y="734.3" width="697.8" height="70" fill="#f9f9f9"/><rect x="1171.1" y="733.6" width="697.8" height="1.5" fill="#dcdcdc"/><rect x="1171.1" y="803.6" width="697.8" height="1.5" fill="#dcdcdc"/><rect x="1635.1" y="750.3" width="87.7" height="41.2" rx="5" fill="#ebebeb"/><rect x="1737" y="750.3" width="118.6" height="41.2" rx="5" fill="#ebebeb"/><path d="M1653 766.6 L1663.2 772.3 L1653 778 Z" fill="#111"/><path d="M1751 766.6 L1758.8 772.3 L1751 778 Z M1758.8 766.6 L1766.6 772.3 L1758.8 778 Z" fill="#111"/></svg>
<div class="t" style="left:1250.4px;top:263.0px;font:normal 400 24.0px/24.0px 'Liberation Sans';color:#333;letter-spacing:0.53px;-webkit-text-stroke:0.35px #333">Snowflake Connection</div>
<div class="t" style="left:1271.7px;top:297.0px;font:normal 400 20.25px/20.25px 'Liberation Sans';color:#333;letter-spacing:0.44px;">Connected</div>
<div class="b" style="left:1635.2px;top:318.4px;width:270.8px;height:39.4px;background:#fff;border-radius:6px;box-shadow:0 2px 5px rgba(0,0,0,0.22),0 0 1px rgba(0,0,0,0.15)"></div>
<div class="t" style="left:1648.1px;top:328.0px;font:normal 400 20.75px/20.75px 'Liberation Sans';color:#555;letter-spacing:-0.10px;">Refreshes daily at 6:00 am</div>
<div class="t" style="left:1168.6px;top:369.0px;font:normal 700 21.0px/21.0px 'Liberation Sans';color:#222;letter-spacing:0.50px;">Database</div>
<div class="t" style="left:1531.1px;top:369.0px;font:normal 700 21.0px/21.0px 'Liberation Sans';color:#222;letter-spacing:0.12px;">Schema</div>
<div class="t" style="left:1183.6px;top:417.0px;font:normal 400 22.0px/22.0px 'Liberation Sans';color:#111;letter-spacing:-0.56px;">DEMO</div>
<div class="t" style="left:1545.0px;top:417.0px;font:normal 400 22.0px/22.0px 'Liberation Sans';color:#111;letter-spacing:-0.56px;">PUBLIC</div>
<div class="t" style="left:1169.2px;top:496.0px;font:normal 700 21.0px/21.0px 'Liberation Sans';color:#222;letter-spacing:0.17px;">Query</div>
<div class="t" style="left:1700.5px;top:489.0px;font:normal 700 21.75px/21.75px 'Liberation Sans';color:#222;letter-spacing:-0.09px;">Create variable</div>
<div class="t" style="left:1193.5px;top:543px;font:400 22.75px/22.75px 'Liberation Mono';color:#222;letter-spacing:0px;-webkit-text-stroke:0.3px #222">1</div>
<div class="t" style="left:1240.1px;top:543px;font:400 22.75px/22.75px 'Liberation Mono';color:#222;letter-spacing:-0.02px;-webkit-text-stroke:0.3px #222"><span style="color:#770088">select</span> * <span style="color:#770088">from</span> rz_us_flights</div>
<div class="t" style="left:1190.9px;top:759.0px;font:normal 400 22.5px/22.5px 'Liberation Sans';color:#111;letter-spacing:0.06px;-webkit-text-stroke:0.35px #111">Console</div>
<div class="t" style="left:1672.9px;top:760.0px;font:normal 400 21.0px/21.0px 'Liberation Sans';color:#111;letter-spacing:0.62px;-webkit-text-stroke:0.35px #111">Run</div>
<div class="t" style="left:1774.9px;top:760.0px;font:normal 400 21.0px/21.0px 'Liberation Sans';color:#111;letter-spacing:0.60px;-webkit-text-stroke:0.35px #111">Run All</div>
<div class="t" style="left:1190.6px;top:833px;font:400 22.75px/22.75px 'Liberation Mono';color:#111;letter-spacing:-0.02px;-webkit-text-stroke:0.3px #111">Complete: imported 7,213,446 rows in 5 seconds</div>
<div class="b" style="left:0px;top:872px;width:1124.3px;height:65px;background:#fafafa"></div>
<svg class="b" style="left:0;top:0" width="1910" height="937" viewBox="0 0 1910 937"><rect x="0" y="871.6" width="1124.3" height="1.3" fill="#dcdcdc"/><path d="M35.5 898.6 V918.2 M25.7 908.4 H45.3" stroke="#222" stroke-width="2.6" stroke-linecap="butt"/><path d="M99 901.1 H125.4 M99 908.7 H125.4 M99 916.3 H125.4" stroke="#222" stroke-width="2.5" stroke-linecap="round"/><defs><linearGradient id="sh" x1="0" x2="1"><stop offset="0" stop-color="#000" stop-opacity="0.07"/><stop offset="1" stop-color="#000" stop-opacity="0"/></linearGradient></defs><rect x="151.5" y="872.9" width="6" height="64.1" fill="url(#sh)"/><rect x="150.6" y="872.9" width="1.3" height="64.1" fill="#dddddd"/><rect x="453.7" y="880.8" width="253.6" height="56" rx="5" fill="#e3e3e3"/><rect x="715.8" y="872.9" width="1.3" height="64.1" fill="#dddddd"/><path d="M757.6 897.8 L747.2 907.4 L757.6 917 M795 897.8 L805.4 907.4 L795 917" fill="none" stroke="#222" stroke-width="2.5" stroke-linecap="round" stroke-linejoin="round"/></svg>
<div class="t" style="left:177.7px;top:896.0px;font:normal 400 24.0px/24.0px 'Liberation Sans';color:#a3a3a3;letter-spacing:0.19px;-webkit-text-stroke:0.3px #a3a3a3">Operations Dashboard</div>
<div class="t" style="left:480.5px;top:896.0px;font:normal 400 25.75px/25.75px 'Liberation Sans';color:#1a1a1a;letter-spacing:-0.60px;-webkit-text-stroke:0.3px #1a1a1a">Flights Dashboard</div>
<div class="t" style="left:851.0px;top:885.0px;font:normal 400 20.25px/20.25px 'Liberation Sans';color:#3a3a3a;letter-spacing:0.25px;-webkit-text-stroke:0.25px #3a3a3a">Table Updated</div>
<div class="t" style="left:884.8px;top:910.0px;font:normal 400 21.0px/21.0px 'Liberation Sans';color:#3a3a3a;letter-spacing:-0.11px;">1 hour ago</div>
<div class="t" style="left:1005.9px;top:885.0px;font:normal 400 20.25px/20.25px 'Liberation Sans';color:#3a3a3a;letter-spacing:-0.05px;-webkit-text-stroke:0.25px #3a3a3a">Table Rows</div>
<div class="t" style="left:1012.9px;top:910.0px;font:normal 400 21.0px/21.0px 'Liberation Sans';color:#3a3a3a;letter-spacing:0.50px;">7,213,446</div>
</body></html>
